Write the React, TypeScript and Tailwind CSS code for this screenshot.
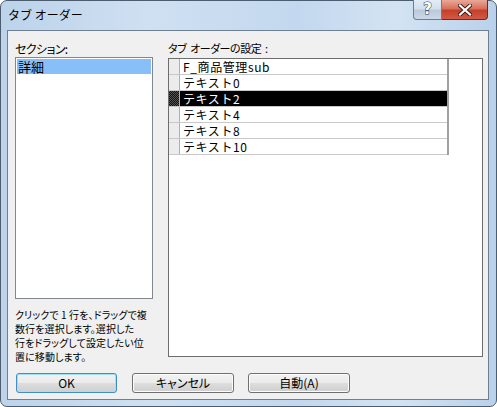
import React from "react";

const jp = "font-['Noto_Sans_CJK_JP','Noto_Sans',sans-serif]";

function Btn({ label, def }: { label: string; def?: boolean }) {
  return (
    <div
      className={`h-[20px] rounded-[3px] border ${
        def ? "border-[#3c8fc9] shadow-[inset_0_0_0_1px_#9fe0fb]" : "border-[#707070] shadow-[inset_0_0_0_1px_#fcfcfc]"
      } bg-[linear-gradient(#f2f2f2_0%,#ebebeb_48%,#dddddd_52%,#cfcfcf_100%)] flex items-center justify-center text-[12px] leading-none text-black [font-feature-settings:'palt']`}
    >
      {label}
    </div>
  );
}

const rows = ["F_商品管理sub", "テキスト0", "テキスト2", "テキスト4", "テキスト8", "テキスト10"];
const help = ["クリックで 1 行を、ドラッグで複", "数行を選択します。選択した", "行をドラッグして設定したい位", "置に移動します。"];

export default function App() {
  return (
    <div className={`w-[497px] h-[407px] ${jp} overflow-hidden`}>
      <div className="w-[497px] h-[407px] rounded-[7px] border border-[#4d5d70] bg-[linear-gradient(90deg,#bcd3ea,#cfe0f2_30%,#c3d8ee_60%,#d3e3f3_80%,#b9d1ea)] flex flex-col">
        {/* Title bar */}
        <div className="h-[29px] flex items-start relative">
          <div className="pl-[7px] pt-[6px] text-[12px] leading-[16px] text-black">タブ オーダー</div>
          <div className="ml-auto mr-[8px] flex -mt-px">
            <div className="w-[29px] h-[20px] rounded-bl-[4px] border border-[#6d7d90] border-t-0 bg-[linear-gradient(#e4ecf5_0%,#d3dfec_48%,#b9c9dc_52%,#cbd9e8_100%)] flex items-center justify-center">
              <span className="text-[15px] font-bold leading-none text-white [-webkit-text-stroke:1px_#2a3a4c] [paint-order:stroke_fill] font-['DejaVu_Sans',sans-serif]">?</span>
            </div>
            <div className="w-[46px] h-[20px] rounded-br-[4px] border border-[#6b2a22] border-t-0 border-l-0 bg-[linear-gradient(#e9a898_0%,#d8705c_45%,#c5402a_55%,#d25a45_100%)] flex items-center justify-center">
              <svg width="14" height="12" viewBox="0 0 14 12">
                <path d="M2 1.5 L12 10.5 M12 1.5 L2 10.5" stroke="#3a1a14" strokeWidth="4" strokeLinecap="square" />
                <path d="M2 1.5 L12 10.5 M12 1.5 L2 10.5" stroke="#ffffff" strokeWidth="2.2" strokeLinecap="square" />
              </svg>
            </div>
          </div>
        </div>
        {/* Client */}
        <div className="ml-[6px] mr-[7px] h-[370px] border border-[#6e7f92] bg-[#f0f0f0] flex flex-col">
          <div className="flex items-start pl-[7px] pt-[9px] h-[326px]">
            {/* Left column */}
            <div className="w-[138px] flex flex-col">
              <div className="h-[17px] text-[12px] leading-[17px] text-black [font-feature-settings:'palt'] tracking-[-0.6px]">セクション:</div>
              <div className="h-[242px] border border-[#828790] bg-white p-px">
                <div className="h-[15px] bg-[#88bff8] text-[13px] leading-[15px] text-black pl-[1px]">詳細</div>
              </div>
              <div className="mt-[9px] flex flex-col text-[10px] text-black [font-feature-settings:'palt'] tracking-[0.1px] whitespace-nowrap">
                {help.map((l) => (
                  <div key={l} className="h-[14px] leading-[14px]">
                    {l}
                  </div>
                ))}
              </div>
            </div>
            {/* Right column */}
            <div className="ml-[15px] w-[315px] flex flex-col">
              <div className="h-[18px] text-[11px] leading-[17px] text-black [font-feature-settings:'palt'] tracking-[-0.5px] whitespace-pre">タブ  オーダーの設定  :</div>
              <div className="h-[299px] border border-[#6d6d6d] bg-white">
                <div className="w-[280px] border-r-2 border-[#a0a0a0]">
                  {rows.map((r, i) => {
                    const sel = i === 2;
                    return (
                      <div key={r} className="h-[16px] flex border-b border-[#c8c8c8]">
                        <div
                          className={`w-[11px] border-r border-[#b0b0b0] ${
                            sel
                              ? "bg-[repeating-conic-gradient(#111_0_25%,#555_0_50%)] bg-[length:2px_2px]"
                              : "bg-[#ececec]"
                          }`}
                        />
                        <div
                          className={`flex-1 pl-[3px] text-[12px] leading-[15px] tracking-[0.6px] ${
                            sel ? "bg-black text-white" : "bg-white text-black"
                          }`}
                        >
                          {r}
                        </div>
                      </div>
                    );
                  })}
                </div>
              </div>
            </div>
          </div>
          {/* Buttons */}
          <div className="mt-[16px] flex pl-[8px]">
            <div className="w-[101px]">
              <Btn label="OK" def />
            </div>
            <div className="w-[102px] ml-[15px]">
              <Btn label="キャンセル" />
            </div>
            <div className="w-[102px] ml-[14px]">
              <Btn label="自動(A)" />
            </div>
          </div>
        </div>
      </div>
    </div>
  );
}
